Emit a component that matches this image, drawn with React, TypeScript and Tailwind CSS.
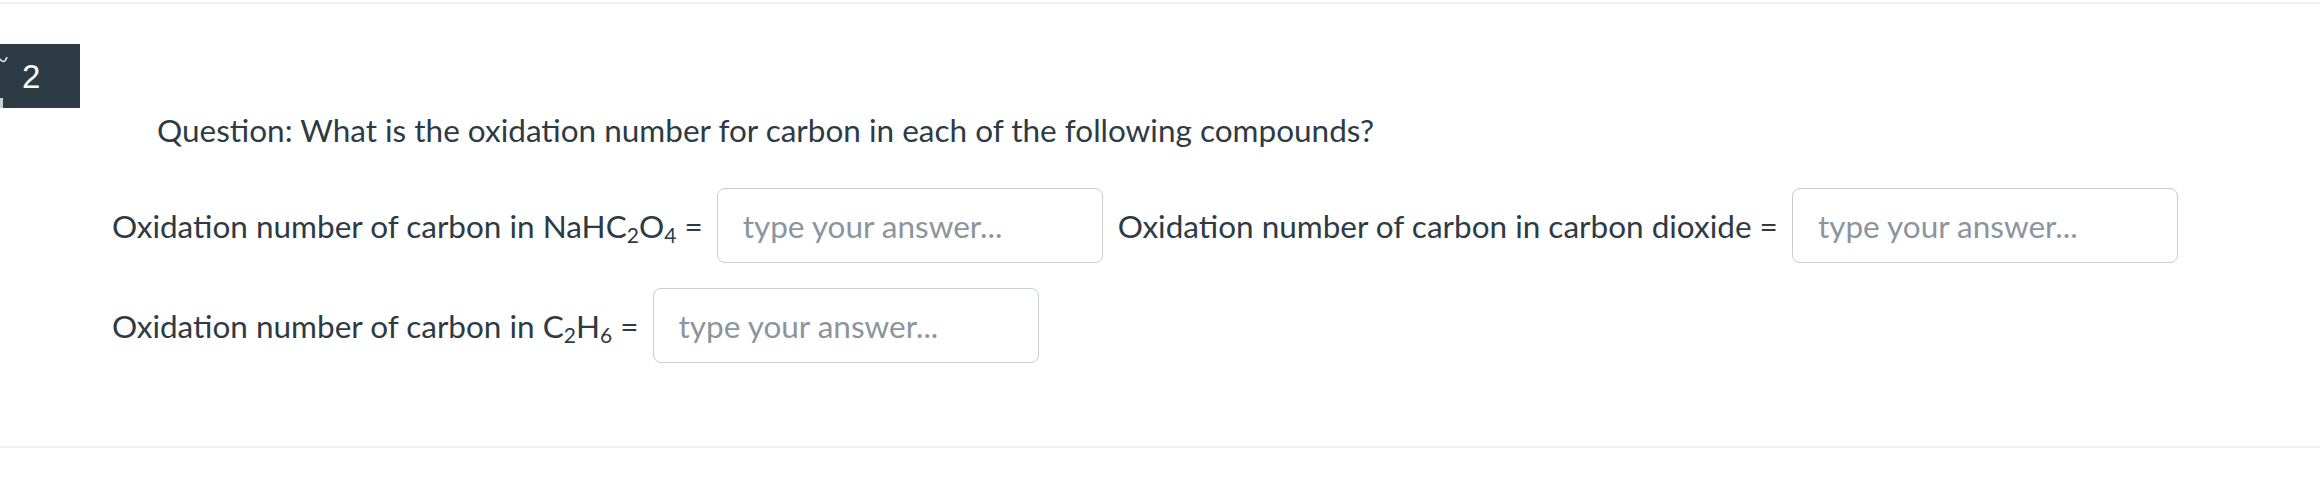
import React from 'react';

const LATO = { fontFamily: 'Lato, "Open Sans", sans-serif' };

// One "label = [input]" pair
const AnswerField = ({ children }: { children: React.ReactNode }) => (
  <div className="flex items-center gap-[14px]">
    <span className="text-[31.5px] leading-[38px] text-[#2d3b45] whitespace-nowrap">{children} =</span>
    <input
      type="text"
      placeholder="type your answer..."
      className="h-[75px] w-[386px] rounded-[8px] border border-[#c7cdd1] bg-white pl-[25px] text-[31.5px] text-[#2d3b45] placeholder:text-[#8b959e] outline-none"
      style={LATO}
    />
  </div>
);

const Sub = ({ children }: { children: React.ReactNode }) => (
  <sub className="text-[21px] relative top-[5px]">{children}</sub>
);

export default function App() {
  return (
    <div className="w-[2320px] h-[484px] bg-white overflow-hidden" style={LATO}>
      <div className="mt-[2px] h-[2px] bg-[#f2f2f3]" />

      {/* Question number badge */}
      <div className="relative mt-[40px] w-[80px] h-[64px] bg-[#2d3b45] flex items-center">
        <svg className="absolute left-0 top-[13px]" width="8" height="12" viewBox="0 0 8 12" fill="none">
          <path d="M0 2 Q4 8 7 0" stroke="#e6e9eb" strokeWidth="1.6" />
        </svg>
        <div className="absolute left-0 bottom-0 w-[3px] h-[10px] bg-[#c9ced2]" />
        <span className="ml-[22px] text-[33px] leading-none text-white" style={{ fontFamily: '"Liberation Sans", Arial, sans-serif' }}>2</span>
      </div>

      <div className="pl-[112px]">
        <p className="ml-[45px] mt-[3px] text-[31.5px] leading-[38px] text-[#2d3b45]">
          Question: What is the oxidation number for carbon in each of the following compounds?
        </p>

        <div className="mt-[39px] flex flex-wrap gap-x-[15px] gap-y-[25px] w-[2100px]">
          <AnswerField>
            Oxidation number of carbon in NaHC<Sub>2</Sub>O<Sub>4</Sub>
          </AnswerField>
          <AnswerField>Oxidation number of carbon in carbon dioxide</AnswerField>
          <AnswerField>
            Oxidation number of carbon in C<Sub>2</Sub>H<Sub>6</Sub>
          </AnswerField>
        </div>
      </div>

      <div className="mt-[83px] h-[2px] bg-[#f2f2f3]" />
    </div>
  );
}
